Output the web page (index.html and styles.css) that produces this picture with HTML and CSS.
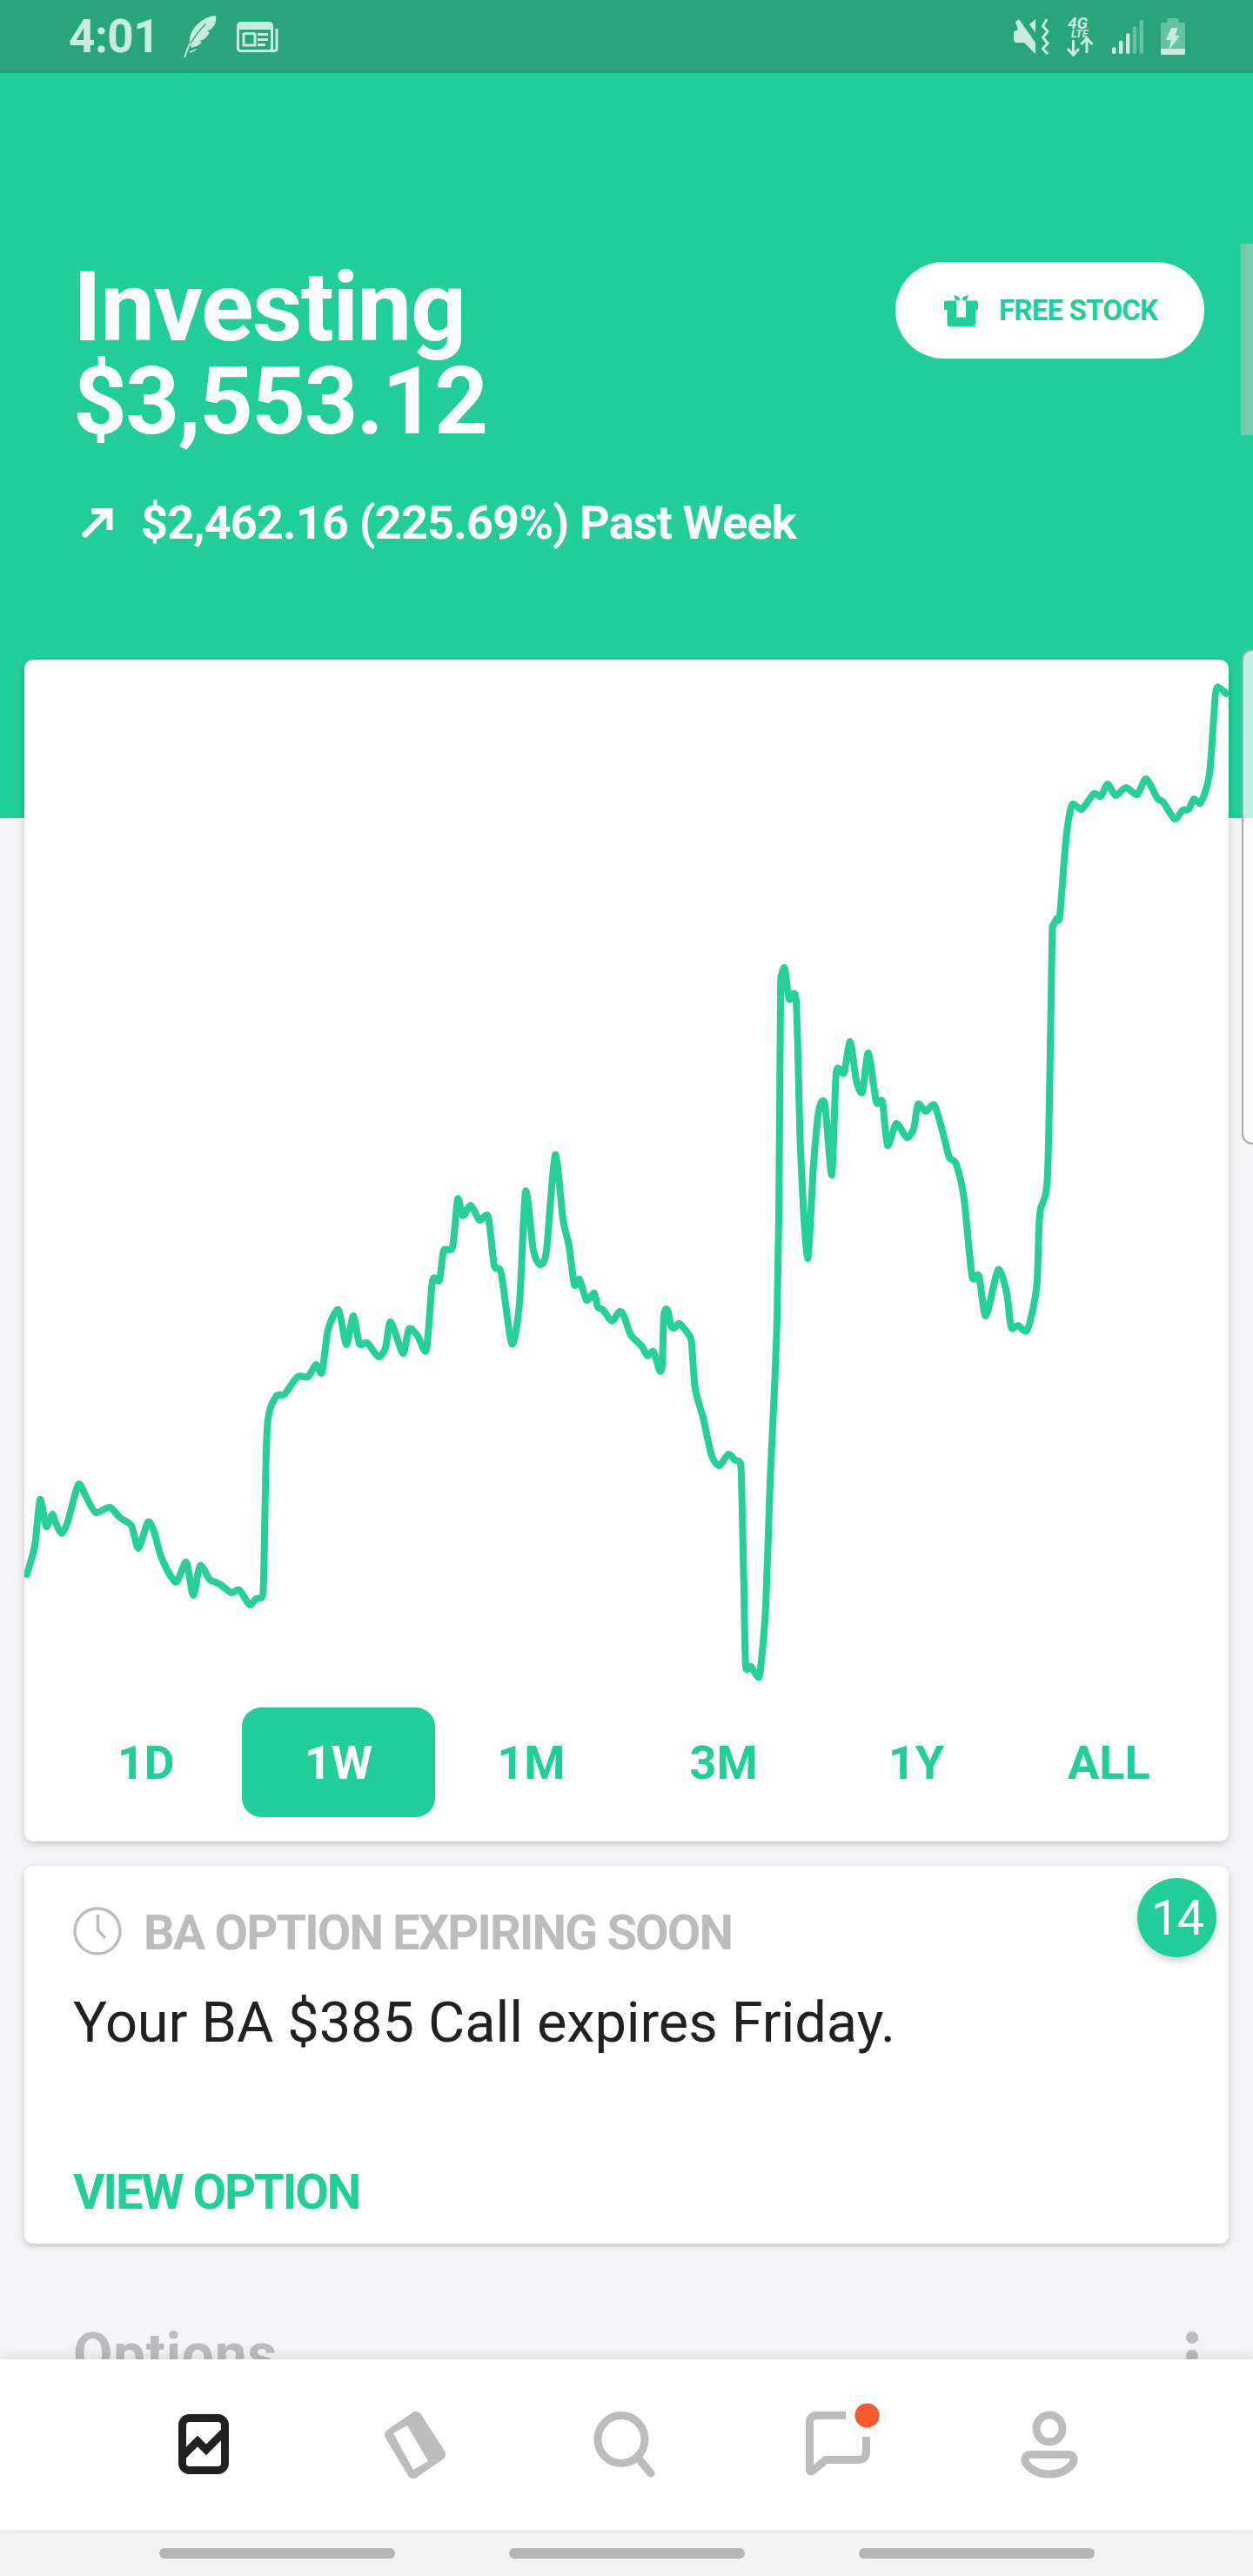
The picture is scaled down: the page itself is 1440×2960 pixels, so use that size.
FILE: index.html
```html
<!DOCTYPE html>
<html lang="en">

<head>
  <meta charset="UTF-8">
  <meta name="viewport" content="width=device-width, initial-scale=1.0">
  <title>Investing</title>
  <link rel="stylesheet" href="styles.css">
</head>

<body>
  <div class="phone">

    <div class="status-bar">
      <div class="status-left">
        <span class="clock-text">4:01</span>
        <svg class="feather" width="36" height="48" viewBox="0 0 36 48">
          <path class="st-fill" d="M6 31 C5 22 10 14 17 8 C23 3 30 0 36 0 C37 6 35 12 31 15 L26 18 L29 19 C26 25 22 28 17 29 L20 30 C17 34 13 36 8 37 Z" />
          <path d="M0 48 L6 32" class="st-line" />
          <path d="M7 32 C11 25 16 18 25 9" class="st-cut" />
          <path class="st-fill" d="M6 41 L14 38 L13 40 L6 43 Z" />
        </svg>
        <svg class="news" width="48" height="35" viewBox="0 0 48 35">
          <rect class="st-stroke" x="1.5" y="1.5" width="39" height="32" rx="3" />
          <path class="st-fill" d="M3 3 H39 V9 H3 Z M8 12 H21 V15 H8 Z" />
          <path class="st-stroke" d="M8 13 V27 H21 V13" />
          <path class="st-fill" d="M24 13 H36 V16 H24 Z M24 19 H36 V22 H24 Z M24 25 H33 V28 H24 Z" />
          <path class="st-stroke" d="M46 8 V31 Q46 33.500 43 33.500 H38" />
        </svg>
      </div>
      <div class="status-right">
        <svg width="41" height="41" viewBox="0 0 41 41">
          <path class="st-fill" d="M2 3 L6 0 L25 27 V40 L12 27 H2 L0 25 V14 L5 12 Z M18 6 L25 0 V16 Z" />
          <path class="st-stroke wave" d="M38 0 L33.500 8 L39 14 L33.500 21 L39 28 L33.500 34 L39 40" />
        </svg>
        <svg width="32" height="45" viewBox="0 0 32 45">
          <text class="lte-big" x="1" y="13">4G</text>
          <text class="lte-small" x="5" y="23">LTE</text>
          <path class="st-stroke" d="M7.500 26 V42 M1 36 L7.500 43 L14 36" />
          <path class="st-stroke" d="M23 41 V25 M16.500 31 L23 24 L29.500 31" />
        </svg>
        <svg width="36" height="39" viewBox="0 0 36 39">
          <rect class="st-fill" x="0" y="31" width="4.500" height="8" rx="2" />
          <rect class="st-fill" x="8" y="23.500" width="4.500" height="15.500" rx="2" />
          <rect class="st-fill" x="16" y="15" width="4.500" height="24" rx="2" />
          <rect class="st-dim" x="23.700" y="7.500" width="4.500" height="31.500" rx="2" />
          <rect class="st-dim" x="31.500" y="0" width="4.500" height="39" rx="2" />
        </svg>
        <svg width="28" height="42" viewBox="0 0 28 42">
          <path class="st-dim" d="M7.500 0 H20.500 V5 H26 Q28 5 28 7 V35 H0 V7 Q0 5 2 5 H7.500 Z" />
          <path class="st-fill" d="M0 35 H28 V40 Q28 42 26 42 H2 Q0 42 0 40 Z" />
          <path class="st-fill" d="M12 11 H19.300 L16.700 20 H22 L9.300 36.700 L12 25 H6 Z" />
        </svg>
      </div>
    </div>

    <main class="content">
      <section class="hero">
        <div class="hero-top">
          <h1 class="hero-title"><span class="title-name">Investing</span><span class="title-value">$3,553.12</span></h1>
          <button class="free-stock">
            <svg width="39" height="36" viewBox="0 0 39 36">
              <path class="gift" d="M2 6.500 H37 Q39 6.500 39 8.500 V17 H36 V33 Q36 36 33 36 H6.500 Q3.500 36 3.500 33 V17 H0 V8.500 Q0 6.500 2 6.500 Z" />
              <path class="gift" d="M11 0 L17 2 L18.500 6 H13 Z M28 0 L22 2 L20.500 6 H26 Z" />
              <rect class="gift-cut" x="14" y="6.500" width="11" height="19" />
            </svg>
            <span>FREE STOCK</span>
          </button>
        </div>
        <div class="hero-change">
          <svg width="36" height="34" viewBox="0 0 36 34">
            <path d="M4 30 L29 5" class="arrow-line" />
            <path d="M11 3.500 H32 V25" class="arrow-head" />
          </svg>
          <span>$2,462.16 (225.69%) Past Week</span>
        </div>
      </section>

      <section class="card chart-card">
        <svg class="chart" width="1384" height="1204" viewBox="28 758 1384 1204">
          <path id="chartLine" class="chart-line" data-points="31,1809 40,1776 46,1723 53,1754 60,1740 64,1750 71,1762 78,1748 90,1706 99,1720 110,1738 126,1732 138,1744 151,1753 159,1779 170,1749 177,1760 186,1791 202,1818 214,1795 222,1833 230,1799 241,1815 252,1820 266,1830 275,1827 287,1844 294,1837 301,1835 303,1814 307,1641 317,1605 327,1602 342,1582 354,1582 363,1568 370,1577 377,1528 389,1505 398,1545 406,1512 413,1544 422,1543 435,1559 443,1549 449,1519 463,1555 470,1527 480,1535 490,1551 497,1472 505,1471 510,1437 520,1433 526,1378 532,1397 541,1385 551,1402 561,1398 568,1454 576,1463 588,1544 597,1498 604,1369 613,1437 621,1453 628,1437 638,1327 647,1401 654,1432 660,1476 666,1470 674,1494 683,1486 687,1502 693,1505 703,1518 712,1507 717,1512 725,1534 737,1546 744,1558 751,1553 758,1575 761,1568 763,1511 767,1505 771,1523 775,1526 781,1521 793,1536 795,1546 799,1596 808,1629 818,1673 827,1684 837,1671 845,1678 850,1680 852,1696 855,1829 857,1914 863,1915 871,1927 874,1918 880,1846 885,1704 890,1596 893,1514 895,1400 897,1145 898,1122 900,1114 902,1114 907,1148 915,1151 920,1322 928,1446 935,1337 941,1276 948,1269 956,1350 961,1233 970,1233 977,1197 984,1241 991,1255 998,1210 1007,1266 1014,1266 1020,1316 1030,1291 1042,1307 1050,1297 1055,1269 1064,1277 1074,1270 1085,1307 1091,1330 1099,1338 1108,1378 1117,1466 1125,1466 1133,1512 1147,1459 1157,1486 1162,1525 1170,1523 1180,1529 1188,1500 1192,1471 1195,1394 1204,1348 1209,1085 1210,1066 1214,1056 1218,1052 1225,965 1232,925 1243,930 1257,912 1265,915 1273,901 1282,914 1294,905 1307,913 1317,895 1330,917 1337,922 1350,941 1359,931 1366,930 1372,918 1380,922 1390,889 1397,797 1402,791 1409,797" />
        </svg>
        <div class="ranges">
          <span class="range">1D</span>
          <span class="range active">1W</span>
          <span class="range">1M</span>
          <span class="range">3M</span>
          <span class="range">1Y</span>
          <span class="range">ALL</span>
        </div>
      </section>

      <section class="card notice-card">
        <div class="notice-head">
          <svg class="notice-clock" width="56" height="56" viewBox="0 0 56 56">
            <circle class="clock-ring" cx="28" cy="28" r="26" />
            <path class="clock-hands" d="M28.500 9 V27 L37 36" />
          </svg>
          <span>BA OPTION EXPIRING SOON</span>
        </div>
        <p class="notice-body">Your BA $385 Call expires Friday.</p>
        <a class="notice-link">VIEW OPTION</a>
        <span class="notice-badge">14</span>
      </section>

      <div class="options-head">
        <h2>Options</h2>
        <div class="kebab"><i></i><i></i><i></i></div>
      </div>
    </main>

    <nav class="tab-bar">
      <svg width="80" height="90" viewBox="194 2760 80 90">
        <rect class="tab-on" x="209.500" y="2778.500" width="49" height="60" rx="8" />
        <path class="tab-on" d="M211 2821 L227 2805 L237 2815 L258 2794" />
      </svg>
      <svg width="80" height="90" viewBox="437 2760 80 90">
        <path class="tab-card" d="M478 2778 L449 2798 L475 2841 L505 2820 Z" />
        <path class="tab-window" d="M452 2796 L468 2787 L492 2828 L475 2838 Z" />
      </svg>
      <svg width="80" height="90" viewBox="680 2760 80 90">
        <ellipse class="tab-off" cx="714" cy="2803" rx="27" ry="27.500" />
        <path class="tab-off" d="M733 2824 L748 2842" />
      </svg>
      <svg width="80" height="90" viewBox="923 2760 80 90">
        <path class="tab-off flat" d="M972 2775.500 H939 Q930.500 2775.500 930.500 2784 V2838 Q930.500 2841 934 2839 L949 2826.500 H986 Q995.500 2826.500 995.500 2817 V2800" />
        <circle class="tab-dot" cx="996.500" cy="2775.500" r="14" />
      </svg>
      <svg width="80" height="90" viewBox="1166 2760 80 90">
        <ellipse class="tab-off" cx="1206" cy="2790.500" rx="15" ry="15.500" />
        <path class="tab-off" d="M1184 2820.500 H1228 C1234 2820.500 1236 2827 1232 2832 C1226 2839 1217 2843 1206 2843 C1195 2843 1186 2839 1180 2832 C1176 2827 1178 2820.500 1184 2820.500 Z" />
      </svg>
    </nav>

    <div class="system-bar">
      <span></span><span></span><span></span>
    </div>

    <div class="scroll-thumb"></div>
    <div class="edge-handle"></div>
  </div>
  <script src="chart.js"></script>
</body>

</html>
```

FILE: styles.css
```css
* {
  box-sizing: border-box;
}

body {
  margin: 0;
  padding: 0;
  font-family: 'Roboto', 'Liberation Sans', sans-serif;
  background-color: #f5f5f7;
}

svg {
  overflow: visible;
}

.phone {
  position: relative;
  display: flex;
  flex-direction: column;
  width: 1440px;
  height: 2960px;
  overflow: hidden;
}

/* status bar */
.status-bar {
  display: flex;
  flex: none;
  justify-content: space-between;
  align-items: center;
  height: 84px;
  padding: 0 78px 0 79px;
  background: #28a57c;
}

.status-left,
.status-right {
  display: flex;
  align-items: center;
}

.status-right {
  gap: 20px;
}

.clock-text {
  width: 133px;
  font-size: 53px;
  font-weight: 700;
  letter-spacing: -0.500px;
  color: #c9eadf;
}

.feather {
  margin-right: 24px;
}

.st-fill {
  fill: #c9eadf;
}

.st-dim {
  fill: #c9eadf;
  opacity: 0.4;
}

.st-stroke {
  fill: none;
  stroke: #c9eadf;
  stroke-width: 3;
}

.st-line {
  fill: none;
  stroke: #c9eadf;
  stroke-width: 2;
}

.st-cut {
  fill: none;
  stroke: #28a57c;
  stroke-width: 1.2;
}

.lte-big,
.lte-small {
  font-weight: 700;
  font-style: italic;
  fill: #c9eadf;
}

.lte-big {
  font-size: 19px;
}

.lte-small {
  font-size: 12.500px;
}

/* green header */
.content {
  position: relative;
  flex: 1;
  min-height: 0;
  overflow: hidden;
}

.hero {
  height: 856px;
  padding: 215px 56px 0 84px;
  background: #21ce99;
  color: #ffffff;
}

.hero-top {
  display: flex;
  justify-content: space-between;
  align-items: flex-start;
}

.hero-title {
  display: flex;
  flex-direction: column;
  margin: 0;
  font-weight: 700;
}

.title-name {
  font-size: 112px;
  line-height: 108px;
  letter-spacing: -1.500px;
}

.title-value {
  font-size: 108px;
  line-height: 108px;
  letter-spacing: -1.800px;
}

.free-stock {
  display: flex;
  align-items: center;
  gap: 24px;
  width: 355px;
  height: 111px;
  margin-top: 2px;
  padding: 0 0 0 56px;
  border: none;
  border-radius: 56px;
  background: #ffffff;
  color: #21ce99;
  font-family: inherit;
  font-size: 33px;
  font-weight: 700;
  letter-spacing: -0.800px;
}

.gift {
  fill: #21ce99;
}

.gift-cut {
  fill: #ffffff;
}

.hero-change {
  display: flex;
  align-items: center;
  gap: 32px;
  margin-top: 56px;
  padding-left: 10px;
  font-size: 54px;
  font-weight: 700;
  line-height: 60px;
  letter-spacing: -0.850px;
}

.arrow-line,
.arrow-head {
  fill: none;
  stroke: #ffffff;
  stroke-width: 7;
}

.arrow-line {
  stroke-linecap: round;
}

/* cards */
.card {
  position: relative;
  margin: 0 28px;
  border-radius: 10px;
  background: #ffffff;
  box-shadow: 0 3px 8px rgba(0, 0, 0, 0.2);
}

.chart-card {
  height: 1358px;
  margin-top: -182px;
}

.chart {
  display: block;
  overflow: hidden;
}

.chart-line {
  fill: none;
  stroke: #26cf9a;
  stroke-width: 8;
  stroke-linejoin: round;
  stroke-linecap: round;
}

.ranges {
  display: grid;
  grid-template-columns: repeat(6, 1fr);
  height: 126px;
  padding: 0 27px 0 29px;
}

.range {
  display: flex;
  justify-content: center;
  align-items: center;
  border-radius: 22px;
  color: #21ce99;
  font-size: 54px;
  font-weight: 700;
}

.range.active {
  background: #21ce99;
  color: #ffffff;
}

.notice-card {
  height: 434px;
  margin-top: 28px;
  padding: 47px 56px 0;
}

.notice-head {
  display: flex;
  align-items: center;
  gap: 25px;
  height: 56px;
  padding-top: 3px;
  color: #bcbcbe;
  font-size: 56px;
  font-weight: 700;
  letter-spacing: -1.900px;
}

.notice-clock {
  margin-top: -3px;
}

.clock-ring,
.clock-hands {
  fill: none;
  stroke: #bcbcbe;
  stroke-width: 3.500;
}

.notice-body {
  margin: 41px 0 0;
  color: #212121;
  font-size: 65px;
  line-height: 72px;
  letter-spacing: -0.100px;
}

.notice-link {
  display: block;
  margin-top: 129px;
  color: #21ce99;
  font-size: 56px;
  font-weight: 700;
  line-height: 60px;
  letter-spacing: -2px;
}

/* badge over the corner of the card */
.notice-badge {
  position: absolute;
  top: 14px;
  right: 14px;
  display: flex;
  justify-content: center;
  align-items: center;
  width: 91px;
  height: 91px;
  border-radius: 50%;
  background: #21ce99;
  box-shadow: 0 4px 8px rgba(0, 0, 0, 0.2);
  color: #ffffff;
  font-size: 56px;
  letter-spacing: -2px;
}

.options-head {
  display: flex;
  justify-content: space-between;
  margin-top: 90px;
  padding: 0 63px 0 84px;
}

.options-head h2 {
  margin: 0;
  color: #bcbcbe;
  font-size: 66px;
  font-weight: 700;
  line-height: 76px;
  letter-spacing: 0.600px;
}

.kebab {
  display: flex;
  flex-direction: column;
  gap: 7px;
  padding-top: 11px;
}

.kebab i {
  display: block;
  width: 14px;
  height: 14px;
  border-radius: 50%;
  background: #bcbcbe;
}

/* bottom tabs */
.tab-bar {
  position: relative;
  display: flex;
  flex: none;
  justify-content: space-between;
  align-items: flex-start;
  height: 196px;
  padding: 49px 194px 0;
  background: #ffffff;
  box-shadow: 0 -4px 14px rgba(0, 0, 0, 0.1);
}

.tab-on {
  fill: none;
  stroke: #212121;
  stroke-width: 9;
}

.tab-off {
  fill: none;
  stroke: #bcbcbe;
  stroke-width: 9;
  stroke-linecap: round;
  stroke-linejoin: round;
}

.tab-off.flat {
  stroke-linecap: butt;
}

.tab-card {
  fill: #bcbcbe;
  stroke: #bcbcbe;
  stroke-width: 14;
  stroke-linejoin: round;
}

.tab-window {
  fill: #ffffff;
}

.tab-dot {
  fill: #f45a32;
}

.system-bar {
  display: flex;
  flex: none;
  justify-content: center;
  gap: 131px;
  height: 53px;
  padding-top: 21px;
  background: #f2f2f2;
}

.system-bar span {
  width: 271px;
  height: 12px;
  border-radius: 6px;
  background: #b4b4b4;
}

/* scroll thumb and edge panel handle sit over the page */
.scroll-thumb {
  position: absolute;
  top: 280px;
  right: 0;
  width: 14px;
  height: 220px;
  background: #76c9ad;
}

.edge-handle {
  position: absolute;
  top: 746px;
  right: -4px;
  width: 17px;
  height: 569px;
  border: 2px solid #a9a9a9;
  border-radius: 12px 0 0 12px;
  background: rgba(255, 255, 255, 0.7);
}
```

FILE: chart.js
```js
// Smooth the price line through its points
const chartLine = document.getElementById('chartLine');
const pts = chartLine.dataset.points.split(' ').map(p => p.split(',').map(Number));

let d = `M${pts[0][0]} ${pts[0][1]}`;
for (let i = 0; i < pts.length - 1; i++) {
  const p0 = pts[i - 1] || pts[i];
  const p1 = pts[i];
  const p2 = pts[i + 1];
  const p3 = pts[i + 2] || p2;
  const c1x = p1[0] + (p2[0] - p0[0]) / 8;
  const c1y = p1[1] + (p2[1] - p0[1]) / 8;
  const c2x = p2[0] - (p3[0] - p1[0]) / 8;
  const c2y = p2[1] - (p3[1] - p1[1]) / 8;
  d += ` C${c1x} ${c1y} ${c2x} ${c2y} ${p2[0]} ${p2[1]}`;
}
chartLine.setAttribute('d', d);
```
